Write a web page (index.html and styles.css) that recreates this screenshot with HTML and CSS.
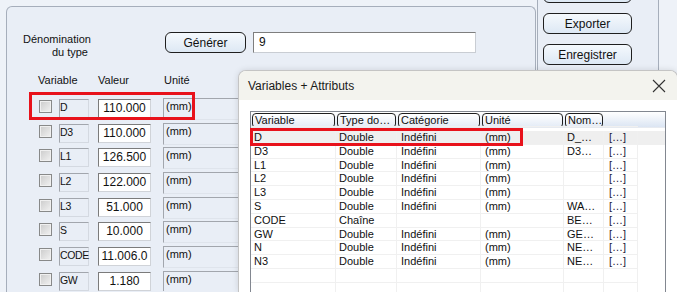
FILE: index.html
```html
<!DOCTYPE html>
<html lang="fr">
<head>
  <meta charset="UTF-8">
  <title>Variables</title>
  <link rel="stylesheet" href="styles.css">
</head>
<body>
  <div class="window">
    <div class="main">
      <div class="group">
        <div class="name-row">
          <div class="name-label">Dénomination<br>du type</div>
          <button class="btn gen-btn">Générer</button>
          <div class="field name-field">9</div>
        </div>

        <div class="var-head">
          <span class="h-var">Variable</span>
          <span class="h-val">Valeur</span>
          <span>Unité</span>
        </div>

        <div class="var-row"><span class="check"></span><span class="var-name">D</span><span class="var-val">110.000</span><span class="var-unit">(mm)</span></div>
        <div class="var-row"><span class="check"></span><span class="var-name">D3</span><span class="var-val">110.000</span><span class="var-unit">(mm)</span></div>
        <div class="var-row"><span class="check"></span><span class="var-name">L1</span><span class="var-val">126.500</span><span class="var-unit">(mm)</span></div>
        <div class="var-row"><span class="check"></span><span class="var-name">L2</span><span class="var-val">122.000</span><span class="var-unit">(mm)</span></div>
        <div class="var-row"><span class="check"></span><span class="var-name">L3</span><span class="var-val">51.000</span><span class="var-unit">(mm)</span></div>
        <div class="var-row"><span class="check"></span><span class="var-name">S</span><span class="var-val">10.000</span><span class="var-unit">(mm)</span></div>
        <div class="var-row"><span class="check"></span><span class="var-name">CODE</span><span class="var-val">11.006.0</span><span class="var-unit">(mm)</span></div>
        <div class="var-row last"><span class="check"></span><span class="var-name">GW</span><span class="var-val">1.180</span><span class="var-unit">(mm)</span></div>
      </div>
    </div>

    <div class="side">
      <button class="btn side-btn first"></button>
      <button class="btn side-btn">Exporter</button>
      <button class="btn side-btn">Enregistrer</button>
    </div>
  </div>

  <!-- Dialog on top of the form -->
  <div class="dialog">
    <div class="dialog-title">
      <span>Variables + Attributs</span>
      <svg class="close" width="14" height="14" viewBox="0 0 14 14">
        <path d="M1 1 L13 13 M13 1 L1 13" stroke="#333" stroke-width="1.1" fill="none"/>
      </svg>
    </div>
    <div class="dialog-body">
      <div class="list">
        <div class="list-head">
          <div class="col c1"><span class="hbox">Variable</span></div>
          <div class="col c2"><span class="hbox">Type do…</span></div>
          <div class="col c3"><span class="hbox">Catégorie</span></div>
          <div class="col c4"><span class="hbox">Unité</span></div>
          <div class="col c5"><span class="hbox">Nom…</span></div>
          <div class="col c6"></div>
        </div>
        <div class="list-body">
          <div class="row selected"><div class="col c1">D</div><div class="col c2">Double</div><div class="col c3">Indéfini</div><div class="col c4">(mm)</div><div class="col c5">D_…</div><div class="col c6">[…]</div></div>
          <div class="row"><div class="col c1">D3</div><div class="col c2">Double</div><div class="col c3">Indéfini</div><div class="col c4">(mm)</div><div class="col c5">D3…</div><div class="col c6">[…]</div></div>
          <div class="row"><div class="col c1">L1</div><div class="col c2">Double</div><div class="col c3">Indéfini</div><div class="col c4">(mm)</div><div class="col c5"></div><div class="col c6">[…]</div></div>
          <div class="row"><div class="col c1">L2</div><div class="col c2">Double</div><div class="col c3">Indéfini</div><div class="col c4">(mm)</div><div class="col c5"></div><div class="col c6">[…]</div></div>
          <div class="row"><div class="col c1">L3</div><div class="col c2">Double</div><div class="col c3">Indéfini</div><div class="col c4">(mm)</div><div class="col c5"></div><div class="col c6">[…]</div></div>
          <div class="row"><div class="col c1">S</div><div class="col c2">Double</div><div class="col c3">Indéfini</div><div class="col c4">(mm)</div><div class="col c5">WA…</div><div class="col c6">[…]</div></div>
          <div class="row"><div class="col c1">CODE</div><div class="col c2">Chaîne</div><div class="col c3"></div><div class="col c4"></div><div class="col c5">BE…</div><div class="col c6">[…]</div></div>
          <div class="row"><div class="col c1">GW</div><div class="col c2">Double</div><div class="col c3">Indéfini</div><div class="col c4">(mm)</div><div class="col c5">GE…</div><div class="col c6">[…]</div></div>
          <div class="row"><div class="col c1">N</div><div class="col c2">Double</div><div class="col c3">Indéfini</div><div class="col c4">(mm)</div><div class="col c5">NE…</div><div class="col c6">[…]</div></div>
          <div class="row"><div class="col c1">N3</div><div class="col c2">Double</div><div class="col c3">Indéfini</div><div class="col c4">(mm)</div><div class="col c5">NE…</div><div class="col c6">[…]</div></div>
          <div class="row"><div class="col c1"></div><div class="col c2"></div><div class="col c3"></div><div class="col c4"></div><div class="col c5"></div><div class="col c6"></div></div>
          <div class="row"><div class="col c1"></div><div class="col c2"></div><div class="col c3"></div><div class="col c4"></div><div class="col c5"></div><div class="col c6"></div></div>
        </div>
      </div>
    </div>
  </div>

  <!-- Red highlight marks -->
  <div class="mark mark-form"></div>
  <div class="mark mark-list"></div>
</body>
</html>
```

FILE: styles.css
```css
/* Reset */
* {
  box-sizing: border-box;
  margin: 0;
  padding: 0;
}

body {
  font-family: "Liberation Sans", Arial, sans-serif;
  font-size: 11px;
  color: #111;
  background-color: #eef2f8;
  width: 677px;
  height: 292px;
  overflow: hidden;
  position: relative;
}

.window {
  display: flex;
  height: 292px;
}

/* Left form area */
.main {
  width: 537px;
  padding: 6px 0 0 6px;
}

.group {
  width: 530px;
  height: 286px;
  overflow: hidden;
  border: 1px solid #a6aebb;
  border-bottom: none;
  border-radius: 6px 6px 0 0;
  background-color: #e9eef6;
}

.name-row {
  display: flex;
  align-items: flex-start;
  height: 27px;
  margin-top: 25px;
  padding-left: 16px;
}

.name-label {
  width: 65px;
  text-align: right;
  line-height: 13px;
  margin-top: 1px;
  font-size: 11px;
}

.btn {
  font-family: "Liberation Sans", Arial, sans-serif;
  font-size: 12px;
  color: #111;
  border: 1px solid #1f1f1f;
  border-radius: 6px;
  background: linear-gradient(#f5f9fd, #dde8f4);
  height: 21px;
}

.gen-btn {
  width: 81px;
  margin-left: 77px;
}

.field {
  background-color: #fff;
  border: 1px solid #c9cdd3;
  border-top-color: #7e7e7e;
  border-left-color: #7e7e7e;
}

.name-field {
  width: 223px;
  height: 21px;
  margin-left: 7px;
  padding-left: 5px;
  line-height: 18px;
  font-size: 12px;
}

.var-head {
  display: flex;
  margin-top: 14px;
  padding-left: 31px;
  line-height: 14px;
  font-size: 11px;
  margin-bottom: 11px;
}

.h-var { width: 60px; }
.h-val { width: 66px; }

.var-row {
  display: flex;
  align-items: flex-start;
  height: 24.7px;
  padding-left: 32px;
}

/* last row is cut by the window bottom */
.var-row.last {
  height: 20px;
  overflow: hidden;
}

.check {
  width: 13px;
  height: 13px;
  margin-top: 2px;
  margin-right: 7px;
  border: 1px solid #888989;
  background: linear-gradient(135deg, #cbcbcb, #f2f2f2);
  box-shadow: inset 0 0 0 1px #f0f0f0;
}

.var-name {
  width: 30px;
  height: 19px;
  margin-top: 1px;
  margin-right: 9px;
  padding-top: 1px;
  line-height: 13px;
  font-size: 10.5px;
  letter-spacing: -0.4px;
  white-space: nowrap;
  border: 1px solid #d4d9e1;
  border-top-color: #a2a6ad;
  border-left-color: #a2a6ad;
}

.var-val {
  width: 53px;
  height: 19px;
  margin-top: 1px;
  margin-right: 12px;
  text-align: center;
  line-height: 17px;
  font-size: 12px;
  background-color: #fff;
  border: 1px solid #d0d3d8;
  border-top-color: #7b7b7b;
  border-left-color: #7b7b7b;
}

.var-unit {
  width: 240px;
  height: 22px;
  padding: 1px 0 0 2px;
  line-height: 13px;
  border: 1px solid #dfe4ec;
  border-top-color: #a2a6ad;
  border-left-color: #a2a6ad;
}

/* Right button column */
.side {
  width: 122px;
  border-left: 1px solid #a6aebb;
  border-right: 1px solid #a6aebb;
  background-color: #e9eef6;
  display: flex;
  flex-direction: column;
  gap: 10px;
  padding-left: 5px;
}

.side-btn {
  width: 89px;
}

.side-btn.first {
  margin-top: -18px;
}

/* Dialog */
.dialog {
  position: absolute;
  left: 238px;
  top: 70px;
  width: 440px;
  height: 222px;
  background-color: #fff;
  border: 1px solid #c4c4c4;
  border-bottom: none;
  border-radius: 8px 8px 0 0;
  box-shadow: 0 0 6px rgba(0, 0, 0, 0.12);
  overflow: hidden;
}

.dialog-title {
  height: 29px;
  background-color: #f3f3ee;
  display: flex;
  align-items: center;
  justify-content: space-between;
  padding: 0 11px 0 9px;
  font-size: 12px;
  color: #1a1a1a;
}

.close {
  display: block;
}

.dialog-body {
  padding: 11px 0 0 11px;
}

.list {
  width: 416px;
  height: 181px;
  overflow: hidden;
  border: 1px solid #828790;
  border-bottom: none;
}

.list-head {
  display: flex;
  height: 16px;
  background: linear-gradient(#ffffff, #dbe5f3);
  border-bottom: 1px solid #e6eaf0;
}

.list-head .col {
  padding: 1px 1px 0 1px;
  border-right: none;
}

.hbox {
  display: block;
  height: 15px;
  padding-left: 2px;
  line-height: 13px;
  border: 1px solid #1e1e1e;
  border-radius: 4px;
  background: linear-gradient(#ffffff, #e3ebf6);
  font-size: 11px;
  white-space: nowrap;
  overflow: hidden;
}

.list-body {
  padding-top: 3px;
}

.row {
  display: flex;
  height: 13.8px;
  line-height: 13.8px;
}

.row.selected {
  background-color: #efefef;
}

.col {
  border-right: 1px solid #f0f0f0;
  border-bottom: 1px solid #f0f0f0;
  white-space: nowrap;
  overflow: hidden;
  padding-left: 3px;
}

.c1 { width: 85px; }
.c2 { width: 61px; }
.c3 { width: 84px; padding-left: 4px; }
.c4 { width: 83px; padding-left: 4px; }
.c5 { width: 40px; }
.c6 { width: 34px; padding-left: 5px; color: #1c1c3a; }

/* Red highlight frames */
.mark {
  position: absolute;
  border: 3px solid #e8121b;
}

.mark-form {
  left: 29px;
  top: 92px;
  width: 166px;
  height: 28px;
}

.mark-list {
  left: 250px;
  top: 128px;
  width: 273px;
  height: 18px;
}
```
